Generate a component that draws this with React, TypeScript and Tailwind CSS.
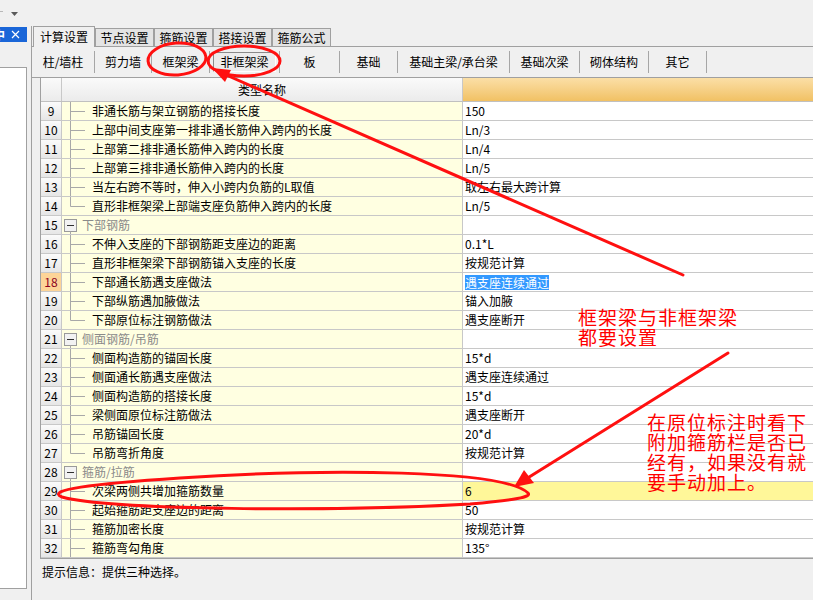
import React from 'react';

type Row = {
  n: number;
  name: string;
  value?: string;
  group?: boolean;
  last?: boolean;
};

const rows: Row[] = [
  { n: 9, name: '非通长筋与架立钢筋的搭接长度', value: '150' },
  { n: 10, name: '上部中间支座第一排非通长筋伸入跨内的长度', value: 'Ln/3' },
  { n: 11, name: '上部第二排非通长筋伸入跨内的长度', value: 'Ln/4' },
  { n: 12, name: '上部第三排非通长筋伸入跨内的长度', value: 'Ln/5' },
  { n: 13, name: '当左右跨不等时，伸入小跨内负筋的L取值', value: '取左右最大跨计算' },
  { n: 14, name: '直形非框架梁上部端支座负筋伸入跨内的长度', value: 'Ln/5', last: true },
  { n: 15, name: '下部钢筋', group: true },
  { n: 16, name: '不伸入支座的下部钢筋距支座边的距离', value: '0.1*L' },
  { n: 17, name: '直形非框架梁下部钢筋锚入支座的长度', value: '按规范计算' },
  { n: 18, name: '下部通长筋遇支座做法', value: '遇支座连续通过' },
  { n: 19, name: '下部纵筋遇加腋做法', value: '锚入加腋' },
  { n: 20, name: '下部原位标注钢筋做法', value: '遇支座断开', last: true },
  { n: 21, name: '侧面钢筋/吊筋', group: true },
  { n: 22, name: '侧面构造筋的锚固长度', value: '15*d' },
  { n: 23, name: '侧面通长筋遇支座做法', value: '遇支座连续通过' },
  { n: 24, name: '侧面构造筋的搭接长度', value: '15*d' },
  { n: 25, name: '梁侧面原位标注筋做法', value: '遇支座断开' },
  { n: 26, name: '吊筋锚固长度', value: '20*d' },
  { n: 27, name: '吊筋弯折角度', value: '按规范计算', last: true },
  { n: 28, name: '箍筋/拉筋', group: true },
  { n: 29, name: '次梁两侧共增加箍筋数量', value: '6' },
  { n: 30, name: '起始箍筋距支座边的距离', value: '50' },
  { n: 31, name: '箍筋加密长度', value: '按规范计算' },
  { n: 32, name: '箍筋弯勾角度', value: '135°' },
];

const tabs = ['节点设置', '箍筋设置', '搭接设置', '箍筋公式'];

const tools = [
  { label: '柱/墙柱', cls: 'w-[63px]' },
  { label: '剪力墙', cls: 'w-[57px]' },
  { label: '框架梁', cls: 'w-[58px]' },
  { label: '非框架梁', cls: 'w-[70px]', pressed: true },
  { label: '板', cls: 'w-[60px]' },
  { label: '基础', cls: 'w-[58px]' },
  { label: '基础主梁/承台梁', cls: 'w-[112px]' },
  { label: '基础次梁', cls: 'w-[70px]' },
  { label: '砌体结构', cls: 'w-[69px]' },
  { label: '其它', cls: 'w-[58px]' },
];

const note1 = ['框架梁与非框架梁', '都要设置'];
const note2 = ['在原位标注时看下', '附加箍筋栏是否已', '经有，如果没有就', '要手动加上。'];

const Branch = ({ last }: { last?: boolean }) => (
  <svg width="30" height="18" className="shrink-0">
    <line x1="8.5" y1="0" x2="8.5" y2={last ? 9.5 : 18} stroke="#a8a8a8" />
    <line x1="8.5" y1="9.5" x2="23" y2="9.5" stroke="#a8a8a8" />
  </svg>
);

const Fold = () => (
  <svg width="20" height="18" className="shrink-0">
    <rect x="2.5" y="3.5" width="12" height="12" fill="#f2f2f2" stroke="#9a9a9a" />
    <line x1="5" y1="9.5" x2="12" y2="9.5" stroke="#303030" />
    <line x1="8.5" y1="15.5" x2="8.5" y2="18" stroke="#a8a8a8" />
  </svg>
);

function TableRow({ row }: { row: Row }) {
  const selected = row.n === 18;
  const marked = row.n === 29;
  return (
    <div className="flex h-[19px] border-b border-[#c8c8c8]">
      <div
        className={
          selected
            ? 'w-[21px] shrink-0 border-r border-[#c8c8c8] bg-[#fdd498] text-[#8b0020] flex items-center justify-center'
            : 'w-[21px] shrink-0 border-r border-[#c8c8c8] bg-gradient-to-b from-[#fbfbfb] to-[#e6e6e6] flex items-center justify-center'
        }
      >
        {row.n}
      </div>
      <div className="w-[401px] shrink-0 border-r border-[#c8c8c8] bg-[#ffffe1] flex items-center">
        {row.group ? (
          <>
            <Fold />
            <span className="text-[#8a8a8a]">{row.name}</span>
          </>
        ) : (
          <>
            <Branch last={row.last} />
            <span className="whitespace-nowrap">{row.name}</span>
          </>
        )}
      </div>
      <div className={marked ? 'flex-1 bg-[#fff799] flex items-center pl-[2px]' : 'flex-1 bg-white flex items-center pl-[2px]'}>
        {selected ? (
          <span className="bg-[#3399ff] text-white leading-[15px]">{row.value}</span>
        ) : (
          <span className="whitespace-nowrap">{row.value}</span>
        )}
      </div>
    </div>
  );
}

export default function App() {
  return (
    <div className="relative w-[813px] h-[600px] overflow-hidden bg-[#f0f0f0] font-['Noto_Sans_CJK_SC',sans-serif] text-[12px] leading-none text-black">
      {/* top strip */}
      <div className="h-[26px] flex items-center">
        <span className="w-[3px] h-px bg-[#b8b8b8] -mt-[4px]" />
        <svg width="8" height="5" className="ml-[8px] mt-[2px]">
          <path d="M0 0h7l-3.5 4z" fill="#5a5a5a" />
        </svg>
      </div>

      <div className="flex h-[574px]">
        {/* left dock */}
        <div className="w-[31px] shrink-0 flex flex-col">
          <div className="mt-px h-[15px] w-[27px] bg-[#1a66d8] flex items-center overflow-hidden text-white">
            <span className="-ml-[7px] text-[12px] font-bold">中</span>
            <svg width="9" height="9" className="ml-[6px]">
              <path d="M1 1l7 7M8 1l-7 7" stroke="#ffffff" strokeWidth="1.2" />
            </svg>
          </div>
          <div className="h-[25px]" />
          <div className="w-[27px] h-[522px] bg-white border border-l-0 border-[#a0a0a0]" />
        </div>

        {/* main panel */}
        <div className="flex-1 min-w-0 flex flex-col border-l border-[#a0a0a0]">
          {/* tabs */}
          <div className="flex items-end h-[21px] border-b border-[#a0a0a0] pl-px">
            <div className="w-[62px] h-[21px] -mb-px bg-[#f0f0f0] border border-b-0 border-[#a0a0a0] flex items-center justify-center">
              计算设置
            </div>
            {tabs.map((t) => (
              <div
                key={t}
                className="w-[59px] h-[18px] bg-[#e4e4e4] border border-b-0 border-[#a0a0a0] flex items-center justify-center"
              >
                {t}
              </div>
            ))}
          </div>

          {/* toolbar */}
          <div className="flex items-center h-[31px] border-b border-[#a0a0a0]">
            {tools.map((b) => (
              <div key={b.label} className={`${b.cls} h-[22px] shrink-0 flex items-center justify-center border-r border-[#a6a6a6]`}>
                {b.pressed ? (
                  <span className="h-[20px] px-[6px] flex items-center border border-[#8a8a8a] border-r-white border-b-white bg-[#ececec]">
                    {b.label}
                  </span>
                ) : (
                  b.label
                )}
              </div>
            ))}
          </div>

          {/* grid */}
          <div className="ml-[8px] border-l border-b border-[#a0a0a0] flex flex-col">
            <div className="flex h-[24px] border-b border-[#c0c0c0]">
              <div className="w-[21px] shrink-0 border-r border-[#c8c8c8] bg-gradient-to-b from-[#fafafa] to-[#ebebeb]" />
              <div className="w-[401px] shrink-0 border-r border-[#c8c8c8] bg-gradient-to-b from-[#fafafa] to-[#ebebeb] flex items-center justify-center">
                类型名称
              </div>
              <div className="flex-1 bg-gradient-to-b from-[#fbdfa6] to-[#f1c163]" />
            </div>
            {rows.map((r) => (
              <TableRow key={r.n} row={r} />
            ))}
          </div>

          {/* hint */}
          <div className="pl-[10px] mt-[5px] h-[16px] leading-[16px]">提示信息：提供三种选择。</div>
        </div>
      </div>

      {/* hand-drawn annotations */}
      <svg width="813" height="600" className="absolute left-0 top-0 pointer-events-none">
        <g fill="none" stroke="#ff1010" strokeWidth="3" strokeLinecap="round">
          <ellipse cx="177" cy="59" rx="29" ry="16" transform="rotate(-4 177 59)" />
          <ellipse cx="244" cy="61" rx="36" ry="15" />
          <line x1="683" y1="275" x2="224" y2="74" />
          <line x1="728" y1="353" x2="526" y2="479" />
          <path d="M528 493 C 505 470, 330 468, 180 478 C 90 484, 45 490, 62 497 C 110 510, 330 512, 470 504 C 515 500, 532 497, 528 493" />
        </g>
        <g fill="#ff1010">
          <path d="M212 68 L231 70 L225 82 Z" />
          <path d="M514 487 L524 470 L534 483 Z" />
        </g>
      </svg>

      <div className="absolute left-[578px] top-[307px] flex flex-col text-[#ff0000]">
        {note1.map((l) => (
          <div key={l} className="h-[20px] text-[19px] leading-[20px] tracking-[1px] whitespace-nowrap">
            {l}
          </div>
        ))}
      </div>
      <div className="absolute left-[647px] top-[412px] flex flex-col text-[#ff0000]">
        {note2.map((l) => (
          <div key={l} className="h-[20px] text-[19px] leading-[20px] tracking-[1px] whitespace-nowrap">
            {l}
          </div>
        ))}
      </div>
    </div>
  );
}
